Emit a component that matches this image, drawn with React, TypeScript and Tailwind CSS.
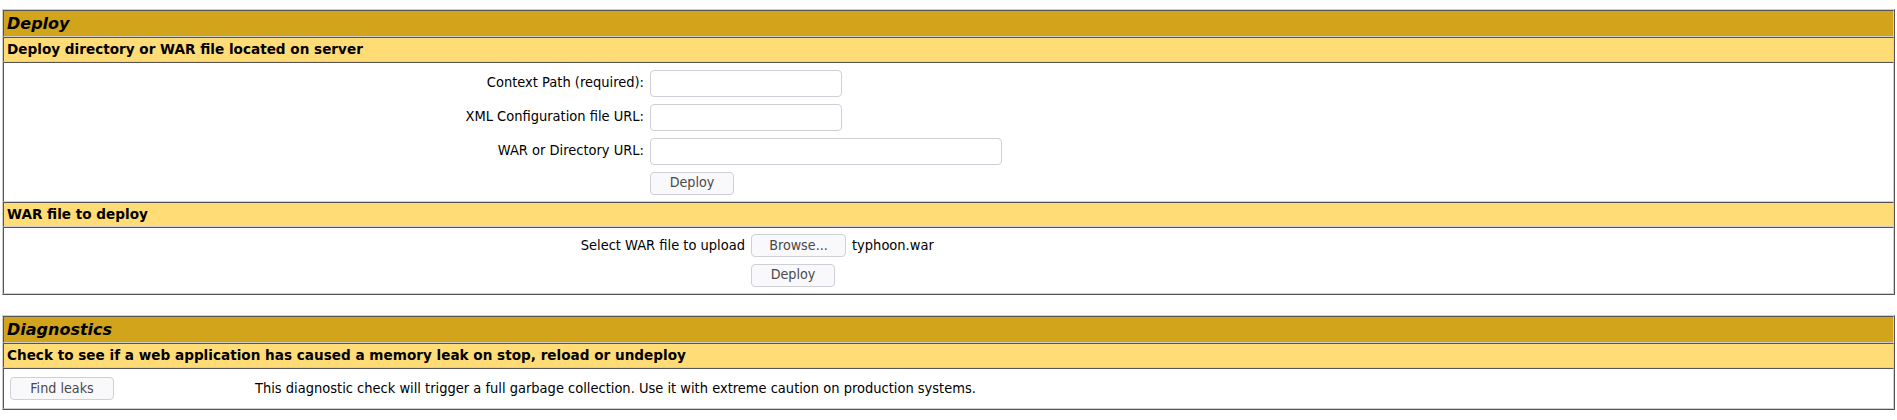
const cell = "border border-t-[#555] border-l-[#555] border-b-[#cfcfcf] border-r-[#cfcfcf]";
const box = "mx-[2px] border border-t-[#cfcfcf] border-l-[#cfcfcf] border-b-[#555] border-r-[#555]";
const label = "font-['DejaVu_Sans_Condensed','DejaVu_Sans',sans-serif] text-[14.5px] text-black";
const btn =
  "h-[23px] rounded-[4px] border border-[#cfcfd8] bg-[#f9f9fb] font-['DejaVu_Sans_Condensed','DejaVu_Sans',sans-serif] text-[14.2px] text-[#4a4a4a] flex items-center justify-center";
const input = "h-[27px] rounded-[4px] border border-[#cfcfd8] bg-white";

function Title({ text }: { text: string }) {
  return (
    <div className={`${cell} bg-[#D2A41C] p-[3px] font-['DejaVu_Sans',sans-serif] text-[16px] italic font-bold leading-[19px] text-black`}>
      {text}
    </div>
  );
}

function Header({ text }: { text: string }) {
  return (
    <div className={`${cell} bg-[#FFDC75] p-[3px] font-['DejaVu_Sans',sans-serif] text-[13.6px] font-bold leading-[17px] text-black`}>
      {text}
    </div>
  );
}

function FieldRow({ name, width }: { name: string; width: string }) {
  return (
    <div className="grid grid-cols-[640px_1fr] h-[34px] items-center">
      <div className={`${label} text-right pr-[3px]`}>{name}</div>
      <div className="pl-[3px]">
        <div className={`${input} ${width}`} />
      </div>
    </div>
  );
}

export default function App() {
  return (
    <div className="pt-[9px] bg-white min-h-[420px]">
      {/* Deploy */}
      <div className={box}>
        <Title text="Deploy" />
        <Header text="Deploy directory or WAR file located on server" />
        <div className={`${cell} p-[3px] bg-white`}>
          <FieldRow name="Context Path (required):" width="w-[192px]" />
          <FieldRow name="XML Configuration file URL:" width="w-[192px]" />
          <FieldRow name="WAR or Directory URL:" width="w-[352px]" />
          <div className="grid grid-cols-[640px_1fr] h-[30px] items-center">
            <div />
            <div className="pl-[3px]">
              <button className={`${btn} w-[84px]`}>Deploy</button>
            </div>
          </div>
        </div>
        <Header text="WAR file to deploy" />
        <div className={`${cell} p-[3px] bg-white`}>
          <div className="grid grid-cols-[741px_1fr] h-[29px] items-center">
            <div className={`${label} text-right pr-[3px]`}>Select WAR file to upload</div>
            <div className="pl-[3px] flex items-center gap-[6px]">
              <button className={`${btn} w-[95px] h-[22px]`}>Browse...</button>
              <span className={label}>typhoon.war</span>
            </div>
          </div>
          <div className="grid grid-cols-[741px_1fr] h-[30px] items-center">
            <div />
            <div className="pl-[3px]">
              <button className={`${btn} w-[84px]`}>Deploy</button>
            </div>
          </div>
        </div>
      </div>

      {/* Diagnostics */}
      <div className={`${box} mt-[20px]`}>
        <Title text="Diagnostics" />
        <Header text="Check to see if a web application has caused a memory leak on stop, reload or undeploy" />
        <div className={`${cell} p-[3px] bg-white`}>
          <div className="grid grid-cols-[245px_1fr] h-[33px] items-center">
            <div className="pl-[3px]">
              <button className={`${btn} w-[104px]`}>Find leaks</button>
            </div>
            <div className={`${label} pl-[3px]`}>
              This diagnostic check will trigger a full garbage collection. Use it with extreme caution on production systems.
            </div>
          </div>
        </div>
      </div>
    </div>
  );
}
